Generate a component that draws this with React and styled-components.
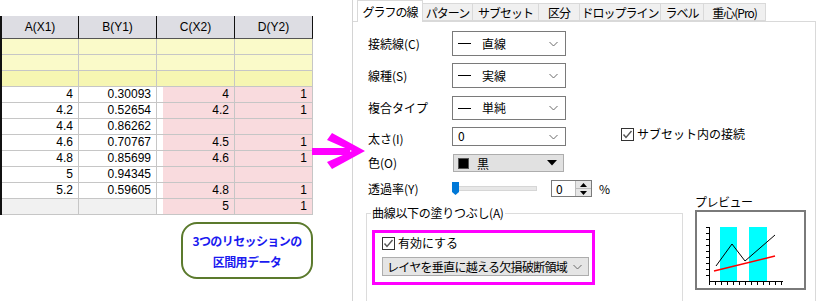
import React from 'react';
import styled, { createGlobalStyle } from 'styled-components';

const GlobalStyle = createGlobalStyle`
  html, body { margin: 0; padding: 0; background: #fff; }
  body {
    font-family: "Noto Sans CJK JP", "Liberation Sans", sans-serif;
    font-size: 12px;
    color: #000;
  }
`;

const Screen = styled.div`
  position: relative;
  width: 819px;
  height: 301px;
  overflow: hidden;
  display: flex;
  background: #fff;
`;

/* ---------- worksheet ---------- */

const SheetPane = styled.div`
  width: 352px;
  flex: none;
  padding-top: 16px;
  box-sizing: border-box;
`;

const Sheet = styled.div`
  display: grid;
  grid-template-columns: 77px 78px 78px 78px;
  grid-template-rows: 23px;
  grid-auto-rows: 16px;
  width: 313px;
  border-left: 2px solid #111;
`;

const HeadCell = styled.div`
  background: #dddde3;
  border-right: 1px solid #111;
  border-bottom: 1px solid #555;
  display: flex;
  align-items: center;
  justify-content: center;
  font-family: "Liberation Sans", sans-serif;
  font-size: 12px;
`;

const Cell = styled.div`
  box-sizing: border-box;
  border-right: 1px solid #c6c6c6;
  border-bottom: 1px solid #c6c6c6;
  background: ${p => p.$inset
    ? `linear-gradient(to right, #fff 6px, ${p.$bg} 6px)`
    : p.$bg};
  text-align: right;
  padding-right: 5px;
  font-family: "Liberation Sans", sans-serif;
  font-size: 12px;
  line-height: 15px;
`;

const Callout = styled.div`
  margin: 7px 0 0 181px;
  width: 132px;
  height: 57px;
  box-sizing: border-box;
  border: 2px solid #5b7a2d;
  border-radius: 16px;
  display: flex;
  flex-direction: column;
  align-items: center;
  justify-content: center;
  color: #1a1af0;
  font-weight: bold;
  font-size: 12px;
  line-height: 21px;
  letter-spacing: -0.6px;
`;

/* ---------- dialog ---------- */

const Dialog = styled.div`
  flex: 1;
  display: flex;
  flex-direction: column;
  border-left: 1px solid #d4d4d4;
`;

const TabBar = styled.div`
  display: flex;
  align-items: flex-end;
  height: 21px;
  padding-left: 4px;
`;

const Tab = styled.div`
  position: relative;
  z-index: ${p => (p.$active ? 1 : 0)};
  width: ${p => p.$w}px;
  height: ${p => (p.$active ? 22 : 18)}px;
  margin-bottom: ${p => (p.$active ? -1 : 0)}px;
  margin-right: -1px;
  box-sizing: border-box;
  background: ${p => (p.$active ? '#fff' : '#f0f0f0')};
  border: 1px solid #d9d9d9;
  border-bottom: ${p => (p.$active ? 'none' : '1px solid #d9d9d9')};
  display: flex;
  align-items: center;
  justify-content: center;
  padding-bottom: ${p => (p.$active ? 1 : 0)}px;
  font-size: 12px;
  letter-spacing: -1px;
  white-space: nowrap;
`;

const Page = styled.div`
  flex: 1;
  margin-right: 3px;
  border-top: 1px solid #d9d9d9;
  border-right: 1px solid #d9d9d9;
  padding: 9px 0 0 15px;
  display: flex;
  flex-direction: column;
`;

const Row = styled.div`
  display: flex;
  align-items: center;
  height: ${p => p.$h}px;
  margin-bottom: ${p => p.$gap || 0}px;
`;

const Label = styled.div`
  width: 84px;
  flex: none;
  font-size: 12px;
  line-height: 14px;
  position: relative;
  top: ${p => p.$shift || 0}px;
`;

const Select = styled.div`
  width: 114px;
  height: 100%;
  box-sizing: border-box;
  border: 1px solid #7a7a7a;
  background: #fff;
  display: flex;
  align-items: ${p => (p.$top ? 'flex-start' : 'center')};
  padding: ${p => (p.$top ? '1px 7px 0 5px' : '0 7px 0 5px')};
  font-size: 12px;
  line-height: 14px;
`;

const Swatch = styled.span`
  width: 13px;
  height: 1px;
  background: #000;
  margin-right: 11px;
`;

const ChevronBox = styled.span`
  margin-left: auto;
  display: flex;
  align-self: center;
`;

const ColorButton = styled.div`
  width: 111px;
  height: 100%;
  margin-left: 1px;
  box-sizing: border-box;
  background: #e1e1e1;
  border: 1px solid #adadad;
  display: flex;
  align-items: center;
  padding: 0 6px 0 4px;
  font-size: 12px;
`;

const ColorChip = styled.span`
  width: 9px;
  height: 9px;
  background: #000;
  border: 1px solid #555;
  margin-right: 8px;
`;

const SliderBox = styled.div`
  position: relative;
  width: 85px;
  height: 100%;
  display: flex;
  align-items: center;
`;

const Track = styled.div`
  margin-left: 6px;
  flex: 1;
  height: 3px;
  background: #e7e7e7;
  border: 1px solid #d6d6d6;
`;

const Thumb = styled.svg`
  position: absolute;
  left: 0;
  top: 2px;
`;

const Spin = styled.div`
  margin-left: 14px;
  width: 41px;
  height: 100%;
  box-sizing: border-box;
  border: 1px solid #7a7a7a;
  display: flex;
  align-items: center;
  padding-left: 4px;
  font-size: 12px;
`;

const SpinButtons = styled.div`
  margin-left: auto;
  width: 15px;
  height: 100%;
  display: flex;
  flex-direction: column;
  border-left: 1px solid #bcbcbc;
`;

const SpinBtn = styled.div`
  flex: 1;
  background: #e6e6e6;
  display: flex;
  align-items: center;
  justify-content: center;
  border-bottom: ${p => (p.$up ? '1px solid #bcbcbc' : 'none')};
`;

const Unit = styled.span`
  margin-left: 7px;
  font-size: 12px;
`;

const CheckRow = styled.label`
  display: flex;
  align-items: center;
  gap: 3px;
  font-size: 12px;
  line-height: 14px;
  margin-left: ${p => p.$ml || 0}px;
  align-self: ${p => (p.$top ? 'flex-start' : 'auto')};
`;

const Lower = styled.div`
  display: flex;
  align-items: flex-start;
  margin-top: 9px;
`;

const Group = styled.fieldset`
  margin: 0 0 0 -2px;
  padding: 0 0 0 4px;
  width: 317px;
  height: 110px;
  box-sizing: border-box;
  border: 1px solid #dcdcdc;
  border-bottom: none;
  min-width: 0;

  legend {
    padding: 0 1px;
    font-size: 12px;
    line-height: 14px;
    letter-spacing: -0.3px;
  }
`;

const Highlight = styled.div`
  margin: 10px 0 0 1px;
  width: 223px;
  height: 55px;
  box-sizing: border-box;
  border: 3px solid #ff00ff;
  padding: 3px 0 0 7px;
`;

const WideSelect = styled.div`
  margin-top: 7px;
  width: 207px;
  height: 19px;
  box-sizing: border-box;
  background: #e5e5e5;
  border: 1px solid #adadad;
  display: flex;
  align-items: center;
  padding: 0 6px 0 4px;
  font-size: 12px;
  letter-spacing: -0.7px;
  white-space: nowrap;
`;

const Preview = styled.div`
  margin: -11px 0 0 12px;
  display: flex;
  flex-direction: column;
`;

const PreviewTitle = styled.div`
  font-size: 12px;
  line-height: 14px;
  letter-spacing: -0.5px;
`;

const PreviewBox = styled.div`
  margin-top: 1px;
  width: 111px;
  height: 80px;
  box-sizing: border-box;
  border: 2px solid #7a7a7a;
  display: flex;
`;

const ArrowMark = styled.svg`
  position: absolute;
  left: 310px;
  top: 130px;
`;

/* ---------- small drawings ---------- */

const Chevron = () => (
  <ChevronBox>
    <svg width="9" height="6" viewBox="0 0 9 6">
      <polyline points="0.5,1 4.5,5 8.5,1" fill="none" stroke="#6a6a6a" strokeWidth="1" />
    </svg>
  </ChevronBox>
);

const CheckBox = () => (
  <svg width="13" height="13" viewBox="0 0 13 13">
    <rect x="0.5" y="0.5" width="12" height="12" fill="#fff" stroke="#333" />
    <polyline points="2.5,6.5 5,9.5 10.5,3" fill="none" stroke="#555" strokeWidth="1.4" />
  </svg>
);

const tabs = [
  { name: 'グラフの線', w: 66, active: true },
  { name: 'パターン', w: 51 },
  { name: 'サブセット', w: 67 },
  { name: '区分', w: 42 },
  { name: 'ドロップライン', w: 82 },
  { name: 'ラベル', w: 44 },
  { name: '重心(Pro)', w: 63 },
];

const YELLOW = '#fafac9';
const YELLOW2 = '#f6f6b2';
const PINK = '#f9dbde';

const data = [
  ['4', '0.30093', '4', '1'],
  ['4.2', '0.52654', '4.2', '1'],
  ['4.4', '0.86262', '', ''],
  ['4.6', '0.70767', '4.5', '1'],
  ['4.8', '0.85699', '4.6', '1'],
  ['5', '0.94345', '', ''],
  ['5.2', '0.59605', '4.8', '1'],
  ['', '', '5', '1'],
];

function Worksheet() {
  return (
    <Sheet>
      {['A(X1)', 'B(Y1)', 'C(X2)', 'D(Y2)'].map(h => <HeadCell key={h}>{h}</HeadCell>)}
      {[YELLOW, YELLOW, YELLOW2].map((bg, r) =>
        [0, 1, 2, 3].map(c => <Cell key={`y${r}${c}`} $bg={bg} />)
      )}
      {data.map((row, r) =>
        row.map((v, c) => {
          const last = r === data.length - 1;
          const bg = c >= 2 ? PINK : last ? '#f1f1f1' : '#fff';
          return (
            <Cell key={`d${r}${c}`} $bg={bg} $inset={c === 2}>{v}</Cell>
          );
        })
      )}
    </Sheet>
  );
}

function PreviewChart() {
  const yTicks = [227, 233, 239, 245, 251, 257, 263, 269, 275];
  const xTicks = [];
  for (let x = 710; x <= 782; x += 6) xTicks.push(x);
  return (
    <svg width="107" height="76" viewBox="698 212 107 76">
      <rect x="721" y="227" width="17" height="54" fill="#00ffff" />
      <rect x="750" y="227" width="18" height="54" fill="#00ffff" />
      <line x1="710.5" y1="227" x2="710.5" y2="281" stroke="#000" />
      <line x1="710" y1="281.5" x2="784" y2="281.5" stroke="#000" />
      {yTicks.map(y => <line key={y} x1="707" y1={y + 0.5} x2="710" y2={y + 0.5} stroke="#000" />)}
      {xTicks.map(x => <line key={x} x1={x + 0.5} y1="281" x2={x + 0.5} y2="285" stroke="#000" />)}
      <polyline points="717,266 733,244 746,261 776,235" fill="none" stroke="#000" strokeWidth="1" />
      <line x1="715" y1="271" x2="776" y2="256" stroke="#ff0000" strokeWidth="1.5" />
    </svg>
  );
}

export default function App() {
  return (
    <Screen>
      <GlobalStyle />
      <SheetPane>
        <Worksheet />
        <Callout>
          <span>3つのリセッションの</span>
          <span>区間用データ</span>
        </Callout>
      </SheetPane>

      <Dialog>
        <TabBar>
          {tabs.map(t => (
            <Tab key={t.name} $w={t.w} $active={t.active}>{t.name}</Tab>
          ))}
        </TabBar>
        <Page>
          <Row $h={25} $gap={7}>
            <Label>接続線(C)</Label>
            <Select><Swatch />直線<Chevron /></Select>
          </Row>
          <Row $h={25} $gap={8}>
            <Label>線種(S)</Label>
            <Select><Swatch />実線<Chevron /></Select>
          </Row>
          <Row $h={24} $gap={7}>
            <Label>複合タイプ</Label>
            <Select><Swatch />単純<Chevron /></Select>
          </Row>
          <Row $h={19} $gap={8}>
            <Label $shift={2}>太さ(I)</Label>
            <Select $top>0<Chevron /></Select>
            <CheckRow $ml={55} $top><CheckBox />サブセット内の接続</CheckRow>
          </Row>
          <Row $h={18} $gap={8}>
            <Label>色(O)</Label>
            <ColorButton>
              <ColorChip />黒
              <ChevronBox>
                <svg width="10" height="6" viewBox="0 0 10 6">
                  <polygon points="0,0 10,0 5,5.5" fill="#000" />
                </svg>
              </ChevronBox>
            </ColorButton>
          </Row>
          <Row $h={17}>
            <Label>透過率(Y)</Label>
            <SliderBox>
              <Track />
              <Thumb width="7" height="13" viewBox="0 0 7 13">
                <path d="M0,0 H7 V10 L3.5,13 L0,10 Z" fill="#0078d7" />
              </Thumb>
            </SliderBox>
            <Spin>
              0
              <SpinButtons>
                <SpinBtn $up>
                  <svg width="7" height="4" viewBox="0 0 7 4"><polygon points="0,4 7,4 3.5,0" fill="#000" /></svg>
                </SpinBtn>
                <SpinBtn>
                  <svg width="7" height="4" viewBox="0 0 7 4"><polygon points="0,0 7,0 3.5,4" fill="#000" /></svg>
                </SpinBtn>
              </SpinButtons>
            </Spin>
            <Unit>%</Unit>
          </Row>

          <Lower>
            <Group>
              <legend>曲線以下の塗りつぶし(A)</legend>
              <Highlight>
                <CheckRow><CheckBox />有効にする</CheckRow>
                <WideSelect>レイヤを垂直に越える欠損破断領域<Chevron /></WideSelect>
              </Highlight>
            </Group>
            <Preview>
              <PreviewTitle>プレビュー</PreviewTitle>
              <PreviewBox><PreviewChart /></PreviewBox>
            </Preview>
          </Lower>
        </Page>
      </Dialog>

      <ArrowMark width="60" height="42" viewBox="0 0 60 42">
        <rect x="2" y="18" width="38" height="7" fill="#ff00ff" />
        <polygon points="22,3 55,21 22,39 17,32 42,21 17,10" fill="#ff00ff" />
      </ArrowMark>
    </Screen>
  );
}
